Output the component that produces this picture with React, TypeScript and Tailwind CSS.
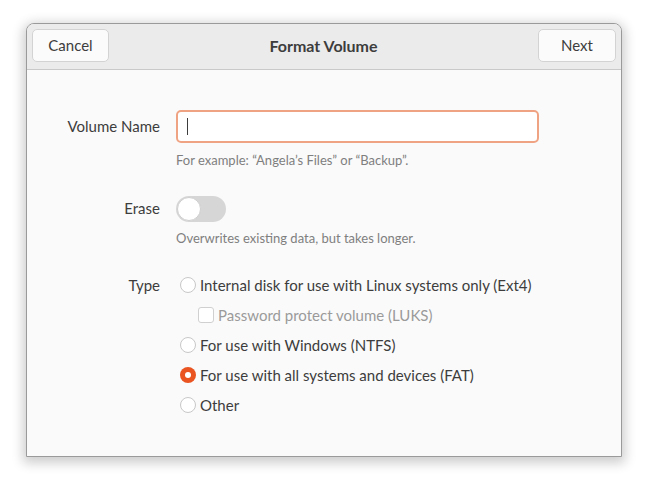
import React, { useState } from 'react';

const font = { fontFamily: 'Lato, "Noto Sans", sans-serif' };

function Radio({ checked }: { checked?: boolean }) {
  return checked ? (
    <span className="flex h-4 w-4 shrink-0 items-center justify-center rounded-full bg-[#e95420]">
      <span className="h-[6px] w-[6px] rounded-full bg-white" />
    </span>
  ) : (
    <span className="h-4 w-4 shrink-0 rounded-full border border-[#c8c8c8] bg-white" />
  );
}

export default function App() {
  const [type, setType] = useState('fat');
  const options = [
    { id: 'ext4', label: 'Internal disk for use with Linux systems only (Ext4)' },
    { id: 'ntfs', label: 'For use with Windows (NTFS)' },
    { id: 'fat', label: 'For use with all systems and devices (FAT)' },
    { id: 'other', label: 'Other' },
  ];

  return (
    <div className="h-[485px] w-[648px] bg-white pl-[26px] pt-[23px]" style={font}>
      <div className="flex h-[434px] w-[596px] flex-col overflow-hidden rounded-t-[8px] border border-[#9a9a9a] bg-[#fafafa] shadow-[0_3px_12px_3px_rgba(0,0,0,0.2)]">
        {/* header bar */}
        <div className="flex h-[46px] shrink-0 items-start justify-between border-b border-[#c9c9c9] bg-[#ebebeb] px-[5px] pt-[5px]">
          <button className="h-[33px] w-[77px] rounded-[5px] border border-[#d3d3d3] bg-[#fbfbfb] text-[15px] text-[#3d3d3d]">
            Cancel
          </button>
          <span className="flex h-[33px] items-center text-[16px] font-bold text-[#3d3d3d]">Format Volume</span>
          <button className="h-[33px] w-[78px] rounded-[5px] border border-[#d3d3d3] bg-[#fbfbfb] text-[15px] text-[#3d3d3d]">
            Next
          </button>
        </div>

        {/* form */}
        <div className="grid grid-cols-[133px_1fr] gap-x-[16px] whitespace-nowrap pr-[82px] pt-[40px] text-[15px] text-[#3d3d3d]">
          <div className="flex h-[33px] items-center justify-end">Volume Name</div>
          <div>
            <div className="flex h-[33px] items-center rounded-[5px] border-2 border-[#f0a383] bg-white px-[9px]">
              <span className="h-[17px] w-px bg-[#3d3d3d]" />
            </div>
            <div className="mt-[8px] text-[13px] text-[#7f7f7f]">For example: “Angela’s Files” or “Backup”.</div>
          </div>

          <div className="mt-[25px] flex h-[26px] items-center justify-end">Erase</div>
          <div className="mt-[25px]">
            <div className="flex h-[26px] w-[50px] items-center rounded-full bg-[#d6d6d6] p-[1px]">
              <span className="h-[24px] w-[24px] rounded-full border border-[#cfcfcf] bg-white" />
            </div>
            <div className="mt-[7px] text-[13px] text-[#7f7f7f]">Overwrites existing data, but takes longer.</div>
          </div>

          <div className="mt-[22px] flex h-[30px] items-center justify-end">Type</div>
          <div className="mt-[22px] flex flex-col pl-[4px]">
            {options.map((o) => (
              <React.Fragment key={o.id}>
                <label className="flex h-[30px] cursor-pointer items-center gap-[4px]" onClick={() => setType(o.id)}>
                  <Radio checked={type === o.id} />
                  <span>{o.label}</span>
                </label>
                {o.id === 'ext4' && (
                  <div className="flex h-[30px] items-center gap-[4px] pl-[18px] text-[#9a9a9a]">
                    <span className="h-4 w-4 shrink-0 rounded-[3px] border border-[#d0d0d0] bg-white" />
                    <span>Password protect volume (LUKS)</span>
                  </div>
                )}
              </React.Fragment>
            ))}
          </div>
        </div>
      </div>
    </div>
  );
}
